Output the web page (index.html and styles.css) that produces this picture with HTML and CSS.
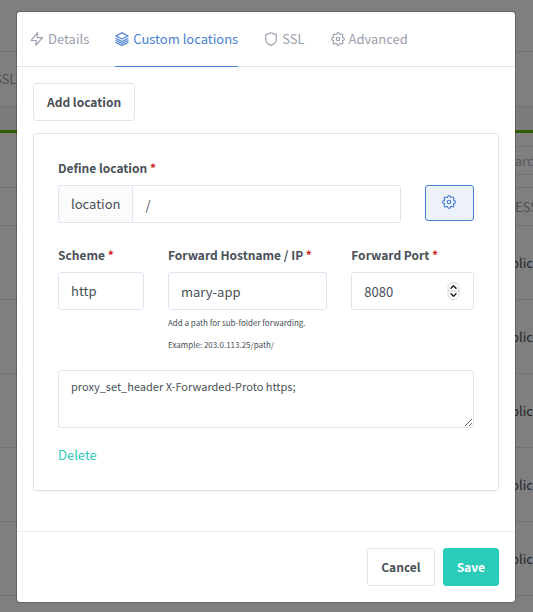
FILE: index.html
```html
<!DOCTYPE html>
<html lang="en">
<head>
<meta charset="utf-8">
<meta name="viewport" content="width=device-width, initial-scale=1">
<title>Custom locations</title>
<link rel="stylesheet" href="styles.css">
</head>
<body>
<svg class="sprite" aria-hidden="true">
  <symbol id="zap" viewBox="0 0 24 24"><polygon points="13 1 2 14.500 11 14.500 10 23 21.500 9.500 12 9.500 13 1"/></symbol>
  <symbol id="layers" viewBox="0 0 24 24"><polygon points="12 1.500 1.500 6.700 12 12 22.500 6.700"/><path d="M1.500 11.200 12 16.400l10.500-5.200M1.500 14.600 12 19.800l10.500-5.200M1.500 18 12 23.200 22.500 18" /></symbol>
  <symbol id="shield" viewBox="0 0 24 24"><path d="M12 23s9-3.500 9-10.500V4.500L12 1.200l-9 3.300v8C3 19.500 12 23 12 23z"/></symbol>
  <symbol id="gear" viewBox="0 0 24 24"><circle cx="12" cy="12" r="3"/><path d="M12 1c1.700 0 2 .8 2.300 2.200.2.900 1.300 1.300 2.100.8 1.200-.8 2.100-1 3.300.2s1 2.100.2 3.300c-.5.800-.1 1.900.8 2.100C22.200 10 23 10.300 23 12s-.8 2-2.300 2.300c-.9.200-1.300 1.300-.8 2.100.8 1.200 1 2.100-.2 3.300s-2.100 1-3.300.2c-.8-.5-1.900-.1-2.100.8C14 22.200 13.700 23 12 23s-2-.8-2.300-2.300c-.2-.9-1.300-1.300-2.100-.8-1.200.8-2.100 1-3.300-.2s-1-2.100-.2-3.300c.5-.8.1-1.900-.8-2.100C1.800 14 1 13.700 1 12s.8-2 2.300-2.300c.9-.2 1.300-1.300.8-2.100-.8-1.200-1-2.100.2-3.300s2.100-1 3.300-.2c.8.5 1.900.1 2.100-.9C10 1.800 10.300 1 12 1z"/></symbol>
  <symbol id="stepper" viewBox="0 0 13 18"><rect class="stepper-box" x="1" y=".5" width="11" height="17" rx="5"/><path class="stepper-line" d="M1 9h11"/><path class="stepper-arrow" d="M4 6.300 6.500 3.800 9 6.300M4 11.700l2.500 2.500L9 11.700"/></symbol>
</svg>

<div class="page" aria-hidden="true">
  <div class="page-top"></div>
  <div class="page-nav">SSL</div>
  <div class="page-gap"></div>
  <div class="page-search"><span class="search-box">Search</span></div>
  <div class="page-head"><span class="page-column">ACCESS</span></div>
  <div class="page-row">Public</div>
  <div class="page-row">Public</div>
  <div class="page-row">Public</div>
  <div class="page-row">Public</div>
  <div class="page-row">Public</div>
</div>

<div class="backdrop">
  <form class="modal" role="dialog" aria-label="Custom locations">
    <nav class="tabs">
      <a class="tab" href="#details"><svg class="icon"><use href="#zap"/></svg>Details</a>
      <a class="tab active" href="#locations"><svg class="icon"><use href="#layers"/></svg>Custom locations</a>
      <a class="tab" href="#ssl"><svg class="icon"><use href="#shield"/></svg>SSL</a>
      <a class="tab" href="#advanced"><svg class="icon"><use href="#gear"/></svg>Advanced</a>
    </nav>

    <div class="body">
      <button class="btn" type="button">Add location</button>

      <section class="card">
        <div class="field wide">
          <label for="path">Define location <span class="required">*</span></label>
          <div class="input-group">
            <span class="prefix">location</span>
            <input id="path" class="control" type="text" value="/">
          </div>
        </div>
        <button class="btn-gear" type="button" aria-label="Advanced settings"><svg class="icon"><use href="#gear"/></svg></button>

        <div class="field scheme">
          <label for="scheme">Scheme <span class="required">*</span></label>
          <select id="scheme" class="control"><option>http</option></select>
        </div>
        <div class="field host">
          <label for="host">Forward Hostname / IP <span class="required">*</span></label>
          <input id="host" class="control" type="text" value="mary-app">
          <p class="hint">Add a path for sub-folder forwarding.</p>
          <p class="hint">Example: 203.0.113.25/path/</p>
        </div>
        <div class="field port">
          <label for="port">Forward Port <span class="required">*</span></label>
          <div class="number">
            <input id="port" class="control" type="number" value="8080">
            <svg class="stepper"><use href="#stepper"/></svg>
          </div>
        </div>

        <textarea class="control config" aria-label="Custom configuration">proxy_set_header X-Forwarded-Proto https;</textarea>
        <a class="delete" href="#delete">Delete</a>
      </section>
    </div>

    <footer class="footer">
      <button class="btn" type="button">Cancel</button>
      <button class="btn primary" type="submit">Save</button>
    </footer>
  </form>
</div>
</body>
</html>
```
FILE: styles.css
```css
* { box-sizing: border-box; }

body {
  margin: 0;
  color: #495057;
  font: 13px/22px "Noto Sans CJK SC", "Open Sans", sans-serif;
}

button, input, select, textarea { font: inherit; color: inherit; }

.sprite { position: absolute; width: 0; height: 0; }

.icon {
  flex: none;
  width: 14px;
  height: 14px;
  fill: none;
  stroke: currentColor;
  stroke-width: 2;
  stroke-linecap: round;
  stroke-linejoin: round;
}

/* Page behind the dialog */
.page { min-height: 100vh; overflow: hidden; background: #fff; }
.page-top { height: 52px; border-bottom: 1px solid #e0e2e6; }
.page-nav {
  height: 55px;
  padding-top: 16px;
  border-bottom: 1px solid #e0e2e6;
  color: #9aa0ac;
  text-indent: -6px;
}
.page-gap { height: 26px; background: #f5f7fb; border-bottom: 3px solid #5eba00; }
.page-search {
  height: 55px;
  display: flex;
  justify-content: flex-end;
  align-items: center;
  border-bottom: 1px solid #e0e2e6;
}
.search-box {
  width: 80px;
  height: 29px;
  padding-left: 46px;
  border: 1px solid #e0e2e6;
  border-right: 0;
  color: #adb5bd;
  line-height: 27px;
}
.page-head {
  height: 38px;
  display: flex;
  justify-content: flex-end;
  align-items: center;
  border-bottom: 1px solid #e0e2e6;
  color: #9aa0ac;
}
.page-column { width: 42px; }
.page-row {
  height: 74px;
  display: flex;
  justify-content: flex-end;
  align-items: center;
  border-bottom: 1px solid #e0e2e6;
}

/* Dialog */
.backdrop {
  position: absolute;
  inset: 0;
  padding: 12px 18px 10px 17px;
  background: rgba(0, 0, 0, 0.5);
}
.modal {
  background: #fff;
  border-radius: 3px;
  box-shadow: 0 0 0 1px rgba(0, 0, 0, 0.2);
}

.tabs {
  display: flex;
  gap: 26px;
  padding: 0 13px;
  border-bottom: 1px solid #dfe4f0;
}
.tab {
  display: flex;
  align-items: center;
  gap: 4px;
  height: 55px;
  margin-bottom: -1px;
  border-bottom: 1px solid transparent;
  color: #9aa0ac;
  text-decoration: none;
}
.tab.active { color: #467fcf; border-color: #467fcf; }

.body { padding: 16px 16px 40px; }

.btn {
  height: 38px;
  padding: 0 13px;
  background: #fff;
  border: 1px solid #dfe4f0;
  border-radius: 3px;
  font-size: 12px;
  font-weight: 700;
}
.btn.primary { background: #2bcbba; border-color: #2bcbba; color: #fff; }

.card {
  display: grid;
  grid-template-columns: repeat(12, minmax(0, 1fr));
  column-gap: 24px;
  margin-top: 12px;
  padding: 23px 24px 24px;
  border: 1px solid #dfe4f0;
  border-radius: 3px;
  box-shadow: 0 1px 2px rgba(0, 0, 0, 0.05);
}
.field { display: flex; flex-direction: column; min-width: 0; }
.wide { grid-column: span 10; }
.scheme { grid-column: span 3; }
.host { grid-column: span 5; }
.port { grid-column: span 4; }
.scheme, .host, .port { margin-top: 21px; }

label {
  height: 28px;
  font-size: 12px;
  font-weight: 700;
  white-space: nowrap;
}
.required { color: #cd201f; }

.control {
  width: 100%;
  min-width: 0;
  height: 38px;
  padding: 0 12px;
  background: #fff;
  border: 1px solid #dfe4f0;
  border-radius: 3px;
  appearance: none;
}
.input-group { display: flex; }
.prefix {
  padding: 7px 12px;
  background: #fbfbfc;
  border: 1px solid #dfe4f0;
  border-right: 0;
  border-radius: 3px 0 0 3px;
}
.input-group .control { border-radius: 0 3px 3px 0; }

.btn-gear {
  grid-column: span 2;
  display: flex;
  align-items: center;
  justify-content: center;
  height: 36px;
  margin-top: 28px;
  padding: 0 0 2px;
  background: #edf2fa;
  border: 1px solid #467fcf;
  border-radius: 3px;
  color: #467fcf;
}
.hint { margin: 0; font-size: 8px; line-height: 22px; }
.hint:first-of-type { margin-top: 2px; }

.number { position: relative; }
.number .control { appearance: textfield; }
.number .control::-webkit-inner-spin-button { appearance: none; }
.stepper { position: absolute; top: 10px; right: 14px; width: 13px; height: 18px; }
.stepper-box { fill: #fff; stroke: #d4d4d4; }
.stepper-line { stroke: #d4d4d4; }
.stepper-arrow { fill: none; stroke: #222; stroke-width: 1.5; stroke-linecap: round; stroke-linejoin: round; }

.config {
  grid-column: 1 / -1;
  height: 58px;
  margin-top: 14px;
  padding: 5px 12px;
  font-size: 11px;
  line-height: 20px;
  resize: vertical;
}
.delete {
  grid-column: 1 / -1;
  justify-self: start;
  margin-top: 16px;
  color: #2bcbba;
  text-decoration: none;
}

.footer {
  display: flex;
  justify-content: flex-end;
  gap: 8px;
  padding: 16px;
  border-top: 1px solid #e9ecef;
}
```
